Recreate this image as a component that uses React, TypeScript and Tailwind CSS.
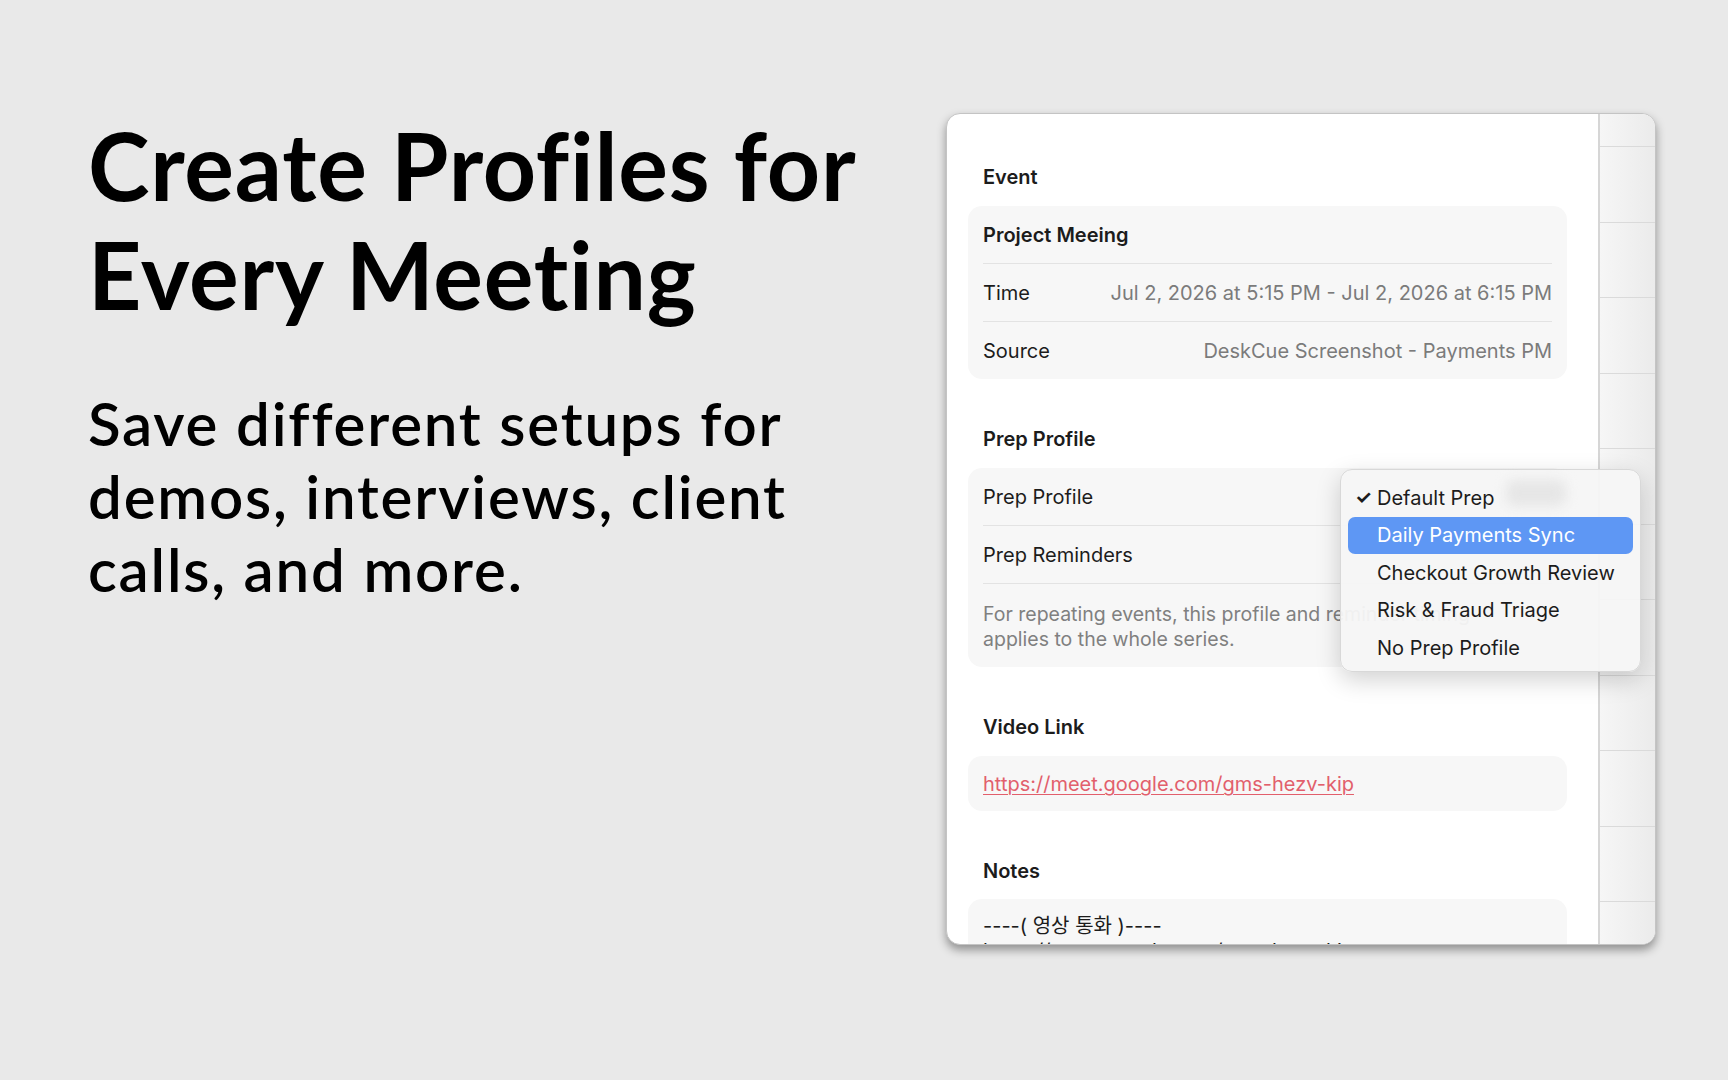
const menuItems = [
  { label: "Default Prep", checked: true },
  { label: "Daily Payments Sync", active: true },
  { label: "Checkout Growth Review" },
  { label: "Risk & Fraud Triage" },
  { label: "No Prep Profile" },
];

function SectionLabel({ children }: { children: React.ReactNode }) {
  return (
    <div className="px-[15px] h-[24px] leading-[24px] text-[20px] font-semibold text-[#1c1c1c]">
      {children}
    </div>
  );
}

function Divider() {
  return <div className="mx-[15px] h-px bg-[#e3e3e3]" />;
}

function Row({ label, value, strong }: { label: string; value?: string; strong?: boolean }) {
  return (
    <div className="h-[57px] px-[15px] flex items-center justify-between text-[20px]">
      <span className={strong ? "font-semibold text-[#1c1c1c]" : "text-[#1c1c1c]"}>{label}</span>
      {value && <span className="text-[#7b7b7b]">{value}</span>}
    </div>
  );
}

function PrepMenu() {
  return (
    <div className="absolute left-[393px] top-[355px] w-[301px] h-[203px] rounded-[12px] bg-[#f6f6f6]/95 border border-[#d8d8d8] shadow-[0_8px_24px_rgba(0,0,0,0.18)] pt-[9px] px-[7px]">
      {/* pop-up button showing through the translucent menu */}
      <div className="absolute left-[165px] top-[10px] w-[60px] h-[26px] rounded-[8px] bg-[#e6e6e6] blur-[6px]" />
      {menuItems.map((item) => (
        <div
          key={item.label}
          className={
            "relative h-[37.5px] rounded-[7px] flex items-center text-[20px] " +
            (item.active ? "bg-[#5e97f4] text-white" : "text-[#1c1c1c]")
          }
        >
          <span className="w-[29px] pl-[7px] text-[19px] font-bold">{item.checked ? "✓" : ""}</span>
          <span>{item.label}</span>
        </div>
      ))}
    </div>
  );
}

function EventWindow() {
  return (
    <div className="relative mt-[113px] mr-[72px] w-[710px] h-[832px] rounded-[14px] overflow-hidden border border-[#c4c4c4] bg-white shadow-[0_5px_10px_rgba(0,0,0,0.38)] flex font-['Inter','Noto_Sans_CJK_KR',sans-serif]">
      <div className="w-[651px] pl-[21px] pr-[31px] pt-[51px]">
        <SectionLabel>Event</SectionLabel>
        <div className="mt-[17px] rounded-[14px] bg-[#f7f7f7]">
          <Row label="Project Meeing" strong />
          <Divider />
          <Row label="Time" value="Jul 2, 2026 at 5:15 PM - Jul 2, 2026 at 6:15 PM" />
          <Divider />
          <Row label="Source" value="DeskCue Screenshot - Payments PM" />
        </div>

        <div className="mt-[48px]">
          <SectionLabel>Prep Profile</SectionLabel>
        </div>
        <div className="mt-[17px] rounded-[14px] bg-[#f7f7f7]">
          <Row label="Prep Profile" />
          <Divider />
          <Row label="Prep Reminders" />
          <Divider />
          <div className="px-[15px] pt-[18px] pb-[15px] text-[19.5px] leading-[25px] text-[#808080]">
            For repeating events, this profile and reminder timing
            <br />
            applies to the whole series.
          </div>
        </div>

        <div className="mt-[48px]">
          <SectionLabel>Video Link</SectionLabel>
        </div>
        <div className="mt-[17px] rounded-[14px] bg-[#f7f7f7] h-[55px] px-[15px] flex items-center text-[20px]">
          <span className="text-[#e25f6c] underline underline-offset-[3px] decoration-1">
            https://meet.google.com/gms-hezv-kip
          </span>
        </div>

        <div className="mt-[48px]">
          <SectionLabel>Notes</SectionLabel>
        </div>
        <div className="mt-[16px] rounded-[14px] bg-[#f7f7f7] px-[15px] pt-[15px] text-[20px] leading-[25px] text-[#1c1c1c]">
          <div>----( 영상 통화 )----</div>
          <div>https://meet.google.com/gms-hezv-kip</div>
        </div>
      </div>

      {/* trailing calendar column */}
      <div className="flex-1 border-l-2 border-[#d6d6d6] bg-gradient-to-r from-[#f6f6f6] to-[#ebebeb] pt-[32px]">
        {Array.from({ length: 11 }).map((_, i) => (
          <div key={i} className="h-[75.5px] border-t border-[#dadada]" />
        ))}
      </div>

      <PrepMenu />
    </div>
  );
}

export default function App() {
  return (
    <div className="w-[1728px] h-[1080px] bg-[#e9e9e9] flex items-start overflow-hidden">
      <div className="flex-1 pl-[88px] pt-[111px] font-['Lato',sans-serif] text-black [font-variant-ligatures:none]">
        <h1 className="text-[93px] leading-[109px] font-bold tracking-[0.8px]">
          Create Profiles for
          <br />
          Every Meeting
        </h1>
        <p className="mt-[58px] text-[60px] leading-[73px] font-semibold tracking-[1.8px]">
          Save different setups for
          <br />
          demos, interviews, client
          <br />
          calls, and more.
        </p>
      </div>
      <EventWindow />
    </div>
  );
}
